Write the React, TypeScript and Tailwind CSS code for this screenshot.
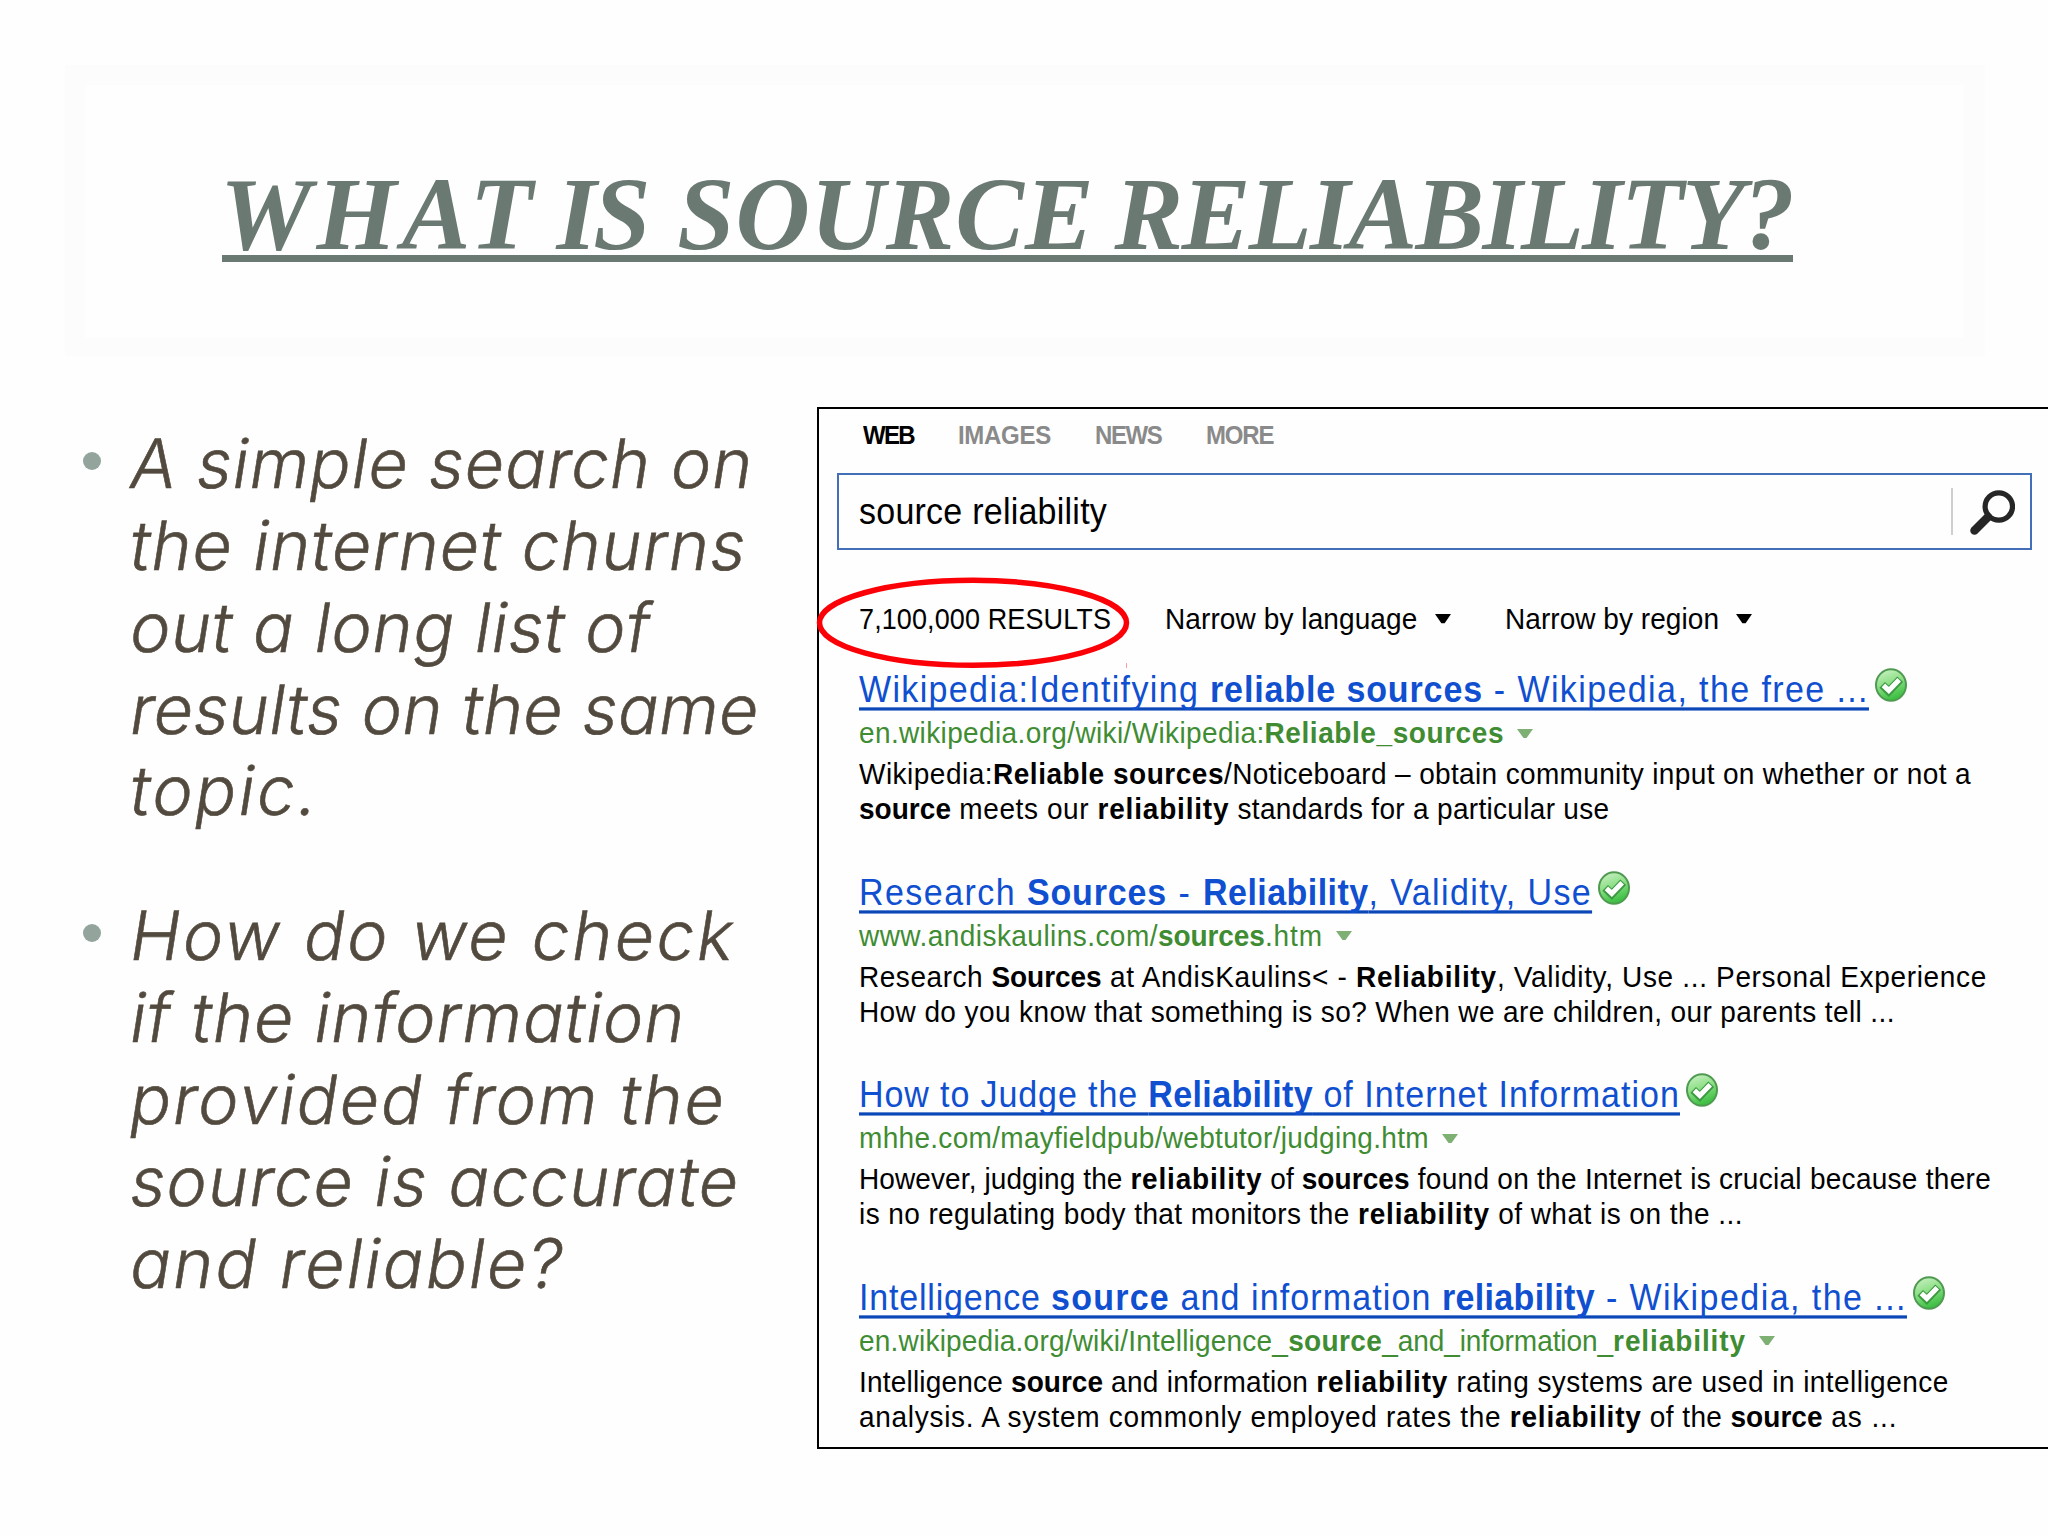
import type { ReactNode } from "react";

type Run = { text: string; track: string; bold?: boolean };
type Result = { title: Run[]; url: Run[]; lines: Run[][] };

const r = (text: string, track: string): Run => ({ text, track });
const b = (text: string, track: string): Run => ({ text, track, bold: true });

const results: Result[] = [
  {
    title: [
      r("Wikipedia:Identifying ", "tracking-[1.35px]"),
      b("reliable sources", "tracking-[0.88px]"),
      r(" - Wikipedia, the free ...", "tracking-[1.4px]"),
    ],
    url: [r("en.wikipedia.org/wiki/Wikipedia:", "tracking-[0.37px]"), b("Reliable_sources", "tracking-[0.57px]")],
    lines: [
      [
        r("Wikipedia:", "tracking-[0.48px]"),
        b("Reliable sources", "tracking-[0.53px]"),
        r("/Noticeboard – obtain community input on whether or not a", "tracking-[0.35px]"),
      ],
      [
        b("source", "tracking-[0.03px]"),
        r(" meets our ", "tracking-[0.58px]"),
        b("reliability", "tracking-[0.82px]"),
        r(" standards for a particular use", "tracking-[0.31px]"),
      ],
    ],
  },
  {
    title: [
      r("Research ", "tracking-[1.45px]"),
      b("Sources", "tracking-[0.83px]"),
      r(" - ", "tracking-[1.93px]"),
      b("Reliability", "tracking-[0.45px]"),
      r(", Validity, Use", "tracking-[1.38px]"),
    ],
    url: [
      r("www.andiskaulins.com/", "tracking-[0.45px]"),
      b("sources", "tracking-[-0.06px]"),
      r(".htm", "tracking-[0.89px]"),
    ],
    lines: [
      [
        r("Research ", "tracking-[0.54px]"),
        b("Sources", "tracking-[-0.07px]"),
        r(" at AndisKaulins< - ", "tracking-[0.7px]"),
        b("Reliability", "tracking-[0.79px]"),
        r(", Validity, Use ... Personal Experience", "tracking-[0.66px]"),
      ],
      [
        r(
          "How do you know that something is so? When we are children, our parents tell ...",
          "tracking-[0.4px]",
        ),
      ],
    ],
  },
  {
    title: [
      r("How to Judge the ", "tracking-[0.9px]"),
      b("Reliability", "tracking-[0.36px]"),
      r(" of Internet Information", "tracking-[1.04px]"),
    ],
    url: [r("mhhe.com/mayfieldpub/webtutor/judging.htm", "tracking-[0.31px]")],
    lines: [
      [
        r("However, judging the ", "tracking-[0.1px]"),
        b("reliability", "tracking-[0.82px]"),
        r(" of ", "tracking-[0.1px]"),
        b("sources", "tracking-[0.09px]"),
        r(" found on the Internet is crucial because there", "tracking-[0.28px]"),
      ],
      [
        r("is no regulating body that monitors the ", "tracking-[0.41px]"),
        b("reliability", "tracking-[0.82px]"),
        r(" of what is on the ...", "tracking-[0.47px]"),
      ],
    ],
  },
  {
    title: [
      r("Intelligence ", "tracking-[0.81px]"),
      b("source", "tracking-[1.25px]"),
      r(" and information ", "tracking-[1.1px]"),
      b("reliability", "tracking-[0.34px]"),
      r(" - Wikipedia, the ...", "tracking-[1.45px]"),
    ],
    url: [
      r("en.wikipedia.org/wiki/Intelligence_", "tracking-[0.21px]"),
      b("source", "tracking-[0.36px]"),
      r("_and_information_", "tracking-[-0.06px]"),
      b("reliability", "tracking-[0.91px]"),
    ],
    lines: [
      [
        r("Intelligence ", "tracking-[0.2px]"),
        b("source", "tracking-[0.03px]"),
        r(" and information ", "tracking-[0.27px]"),
        b("reliability", "tracking-[0.82px]"),
        r(" rating systems are used in intelligence", "tracking-[0.45px]"),
      ],
      [
        r("analysis. A system commonly employed rates the ", "tracking-[0.7px]"),
        b("reliability", "tracking-[0.82px]"),
        r(" of the ", "tracking-[0.4px]"),
        b("source", "tracking-[0.03px]"),
        r(" as ...", "tracking-[0.93px]"),
      ],
    ],
  },
];

const bullets: Run[][] = [
  [
    r("A simple search on", "tracking-[0.9px]"),
    r("the internet churns", "tracking-[1.05px]"),
    r("out a long list of", "tracking-[0.8px]"),
    r("results on the same", "tracking-[0.35px]"),
    r("topic.", "tracking-[2.5px]"),
  ],
  [
    r("How do we check", "tracking-[2.45px]"),
    r("if the information", "tracking-[1px]"),
    r("provided from the", "tracking-[1.95px]"),
    r("source is accurate", "tracking-[1.3px]"),
    r("and reliable?", "tracking-[2.15px]"),
  ],
];

function Runs({ runs }: { runs: Run[] }) {
  return (
    <>
      {runs.map((run, i) =>
        run.bold ? (
          <b key={i} className={`font-bold ${run.track}`}>{run.text}</b>
        ) : (
          <span key={i} className={run.track}>{run.text}</span>
        ),
      )}
    </>
  );
}

function Caret({ className }: { className: string }) {
  return (
    <svg viewBox="0 0 16 9" className={`h-[9px] w-4 shrink-0 ${className}`} preserveAspectRatio="none">
      <path d="M0 0H16L9.5 9H6.5Z" fill="currentColor" />
    </svg>
  );
}

function CheckBadge({ id }: { id: string }) {
  return (
    <svg viewBox="0 0 32 34" className="-mt-[2px] ml-[6px] h-[34px] w-8 shrink-0">
      <defs>
        <linearGradient id={id} x1="0" y1="0" x2="0.35" y2="1">
          <stop offset="0" stopColor="#d3f3cd" />
          <stop offset="0.5" stopColor="#90e08a" />
          <stop offset="1" stopColor="#3fc044" />
        </linearGradient>
      </defs>
      <ellipse cx="16" cy="17" rx="15" ry="15.8" fill={`url(#${id})`} stroke="#4f9a50" strokeWidth="2" />
      <path d="M7.2 16.8L13.8 23.2L25.2 11.2" fill="none" stroke="#3c9a41" strokeWidth="8" />
      <path d="M8.4 17.4L13.8 22.4L24.2 11.8" fill="none" stroke="#fff" strokeWidth="5" />
    </svg>
  );
}

function ResultItem({ result, id }: { result: Result; id: string }) {
  return (
    <article className="h-[202.67px] whitespace-pre text-[28px] text-black">
      <div className="flex h-10 items-start">
        <a className="origin-[0_32px] scale-y-[1.07] text-[34px] leading-10 text-[#0f4fd0] underline decoration-[#0c47b8] decoration-[2.5px] underline-offset-[4.5px] [text-decoration-skip-ink:none]">
          <Runs runs={result.title} />
        </a>
        <CheckBadge id={id} />
      </div>
      <div className="mt-[6px] flex h-9 items-center leading-9 text-[#3f8c33]">
        <span className="origin-[0_28px] scale-y-[1.07]">
          <Runs runs={result.url} />
        </span>
        <Caret className="mb-[2px] ml-[13px] text-[#7db072]" />
      </div>
      <div className="mt-[5px] leading-[35px]">
        {result.lines.map((line, i) => (
          <p key={i} className="origin-[0_27px] scale-y-[1.07]">
            <Runs runs={line} />
          </p>
        ))}
      </div>
    </article>
  );
}

function Word({ children, className }: { children: ReactNode; className: string }) {
  return <span className={`whitespace-pre [word-spacing:-12px] ${className}`}>{children}</span>;
}

export default function App() {
  return (
    <div className="flex h-[1536px] w-[2048px] flex-col overflow-hidden bg-[#fefefe]">
      <header className="mt-[65px] ml-[65px] h-[291px] w-[1920px] border-t-[20px] border-r-[21px] border-b-[18px] border-l-[20px] border-[#fcfcfc] bg-[#fefefe]">
        <h1 className="mt-[67px] ml-[137px] flex h-[110px] w-[1571px] border-b-[7px] border-[#6b7973] font-['Liberation_Serif',serif] text-[103px] leading-[124px] font-bold text-[#6b7973] italic">
          <Word className="-ml-[2px] w-[337px] tracking-[4.99px]">{"WHAT "}</Word>
          <Word className="w-[121px] tracking-[-3.4px]">{"IS "}</Word>
          <Word className="w-[438px] tracking-[0.83px]">{"SOURCE "}</Word>
          <Word className="tracking-[-1.65px]">RELIABILITY?</Word>
        </h1>
      </header>

      <main className="mt-[51px] flex">
        <ul className="w-[817px] shrink-0 space-y-[63px] pt-4 pl-[83px] font-['Inter',sans-serif] text-[68px] leading-[81.85px] font-light text-[#524a3e]">
          {bullets.map((lines, i) => (
            <li key={i} className="flex gap-[26px]">
              <span className="mt-[29px] h-[17.5px] w-[17.5px] shrink-0 rounded-full bg-[#92a49c]" />
              <div className="whitespace-pre [-webkit-text-stroke:0.6px_#524a3e] [font-feature-settings:'cv11']">
                {lines.map((line) => (
                  <div key={line.text} className={`origin-[0_66px] -skew-x-9 ${line.track}`}>
                    {line.text}
                  </div>
                ))}
              </div>
            </li>
          ))}
        </ul>

        <section className="relative h-[1042px] w-[1231px] border-y-2 border-l-2 border-black bg-[#fefefe] font-['Liberation_Sans',sans-serif]">
          <nav className="mt-3 ml-11 flex origin-[0_23px] scale-y-[1.07] text-2xl leading-[30px] font-bold text-[#8a8a8a]">
            <span className="w-[95px] tracking-[-1.66px] text-black">WEB</span>
            <span className="w-[137px] tracking-[-0.3px]">IMAGES</span>
            <span className="w-[111px] tracking-[-1.4px]">NEWS</span>
            <span className="tracking-[-1.2px]">MORE</span>
          </nav>

          <div className="mt-[22px] ml-[18px] flex h-[77px] w-[1195px] items-center border-2 border-[#426fb8] pl-5">
            <span className="w-[1092px] origin-[0_32px] scale-y-[1.07] text-[34px] leading-10 tracking-[0.24px] text-black">
              source reliability
            </span>
            <span className="h-[47px] w-[2px] bg-[#cfcfcf]" />
            <svg viewBox="0 0 46 46" className="ml-[16px] h-[46px] w-[46px]" fill="none" stroke="#262626">
              <circle cx="29.8" cy="17.5" r="13.7" strokeWidth="5.2" />
              <path d="M5.5 41.5L19 28" strokeWidth="8.5" strokeLinecap="round" />
            </svg>
          </div>

          <div className="mt-[52px] ml-10 flex h-9 origin-[0_28px] scale-y-[1.07] items-center text-[28px] leading-9 text-black">
            <span className="w-[306px] text-[27px] tracking-[0.11px]">7,100,000 RESULTS</span>
            <span className="w-[270px] tracking-[0.1px]">Narrow by language</span>
            <Caret className="mb-[2px]" />
            <span className="ml-[54px] w-[231px] tracking-[0.05px]">Narrow by region</span>
            <Caret className="mb-[2px]" />
          </div>

          <div className="mt-8 ml-10">
            {results.map((result, i) => (
              <ResultItem key={i} result={result} id={`badge-${i}`} />
            ))}
          </div>

          <svg viewBox="0 0 314 94" className="absolute top-[167px] -left-[3px] h-[94px] w-[314px]">
            <ellipse cx="157" cy="46.8" rx="153.5" ry="42.5" fill="none" stroke="#fb0007" strokeWidth="5.5" />
            <path d="M310.5 87V92" stroke="#f3a0a4" />
          </svg>
        </section>
      </main>
    </div>
  );
}
